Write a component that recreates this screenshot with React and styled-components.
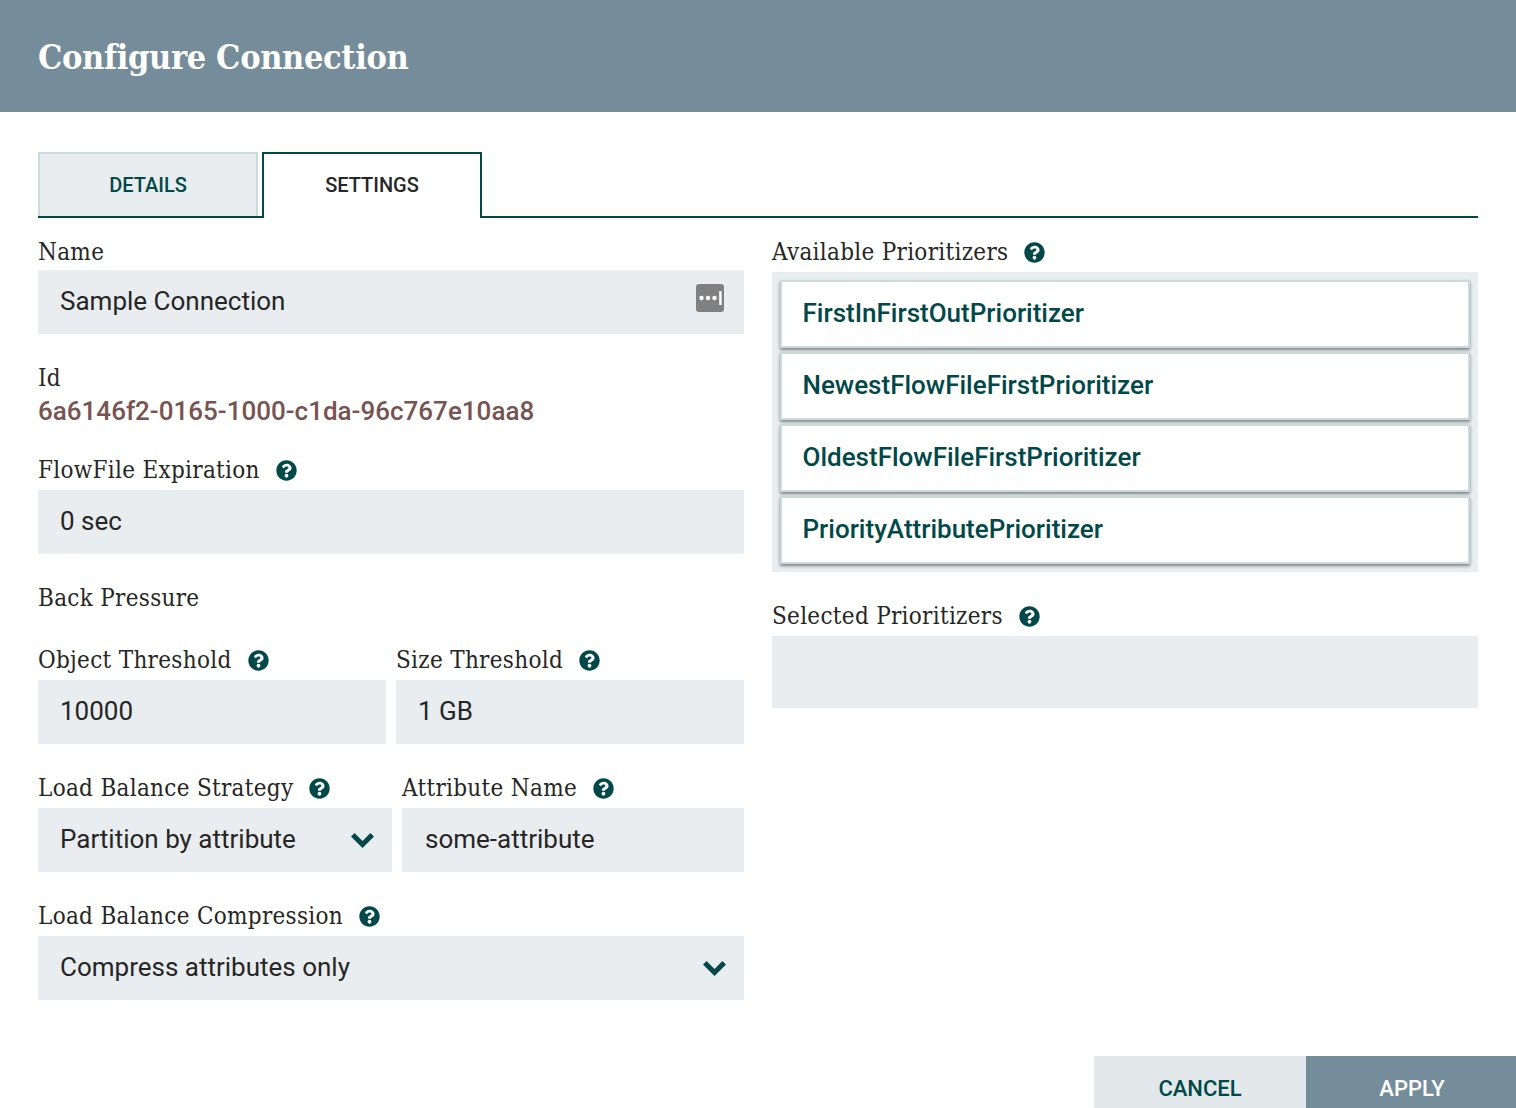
import React from "react";
import styled, { createGlobalStyle } from "styled-components";
import { FaQuestionCircle } from "react-icons/fa";

const Global = createGlobalStyle`
  html, body { margin: 0; padding: 0; background: #fff; }
  body { width: 1516px; height: 1108px; overflow: hidden; font-family: Roboto, sans-serif; }
`;
const slab = `"DejaVu Serif", "Liberation Serif", serif`;

const Dialog = styled.div`
  position: relative;
  width: 1516px;
  height: 1108px;
  display: flex;
  flex-direction: column;
  overflow: hidden;
`;
const Header = styled.header`
  height: 112px;
  flex: none;
  background: #758c9a;
  display: flex;
  align-items: center;
  padding: 0 38px;
  box-sizing: border-box;
`;
const Title = styled.h1`
  margin: 0;
  color: #fff;
  font: 700 34px/1 ${slab};
  letter-spacing: -0.35px;
  font-stretch: condensed;
  padding-top: 2px;
`;
const Body = styled.div`
  padding: 40px 38px 0;
  flex: 1;
`;
const Tabs = styled.div`
  display: flex;
  gap: 4px;
  height: 66px;
  box-sizing: border-box;
  border-bottom: 2px solid #004849;
`;
const Tab = styled.div`
  width: 220px;
  height: ${(p) => (p.$active ? "66px" : "64px")};
  box-sizing: border-box;
  display: flex;
  align-items: center;
  justify-content: center;
  font: 500 20px/1 Roboto, sans-serif;
  padding-bottom: ${(p) => (p.$active ? "2px" : "0")};
  color: ${(p) => (p.$active ? "#262626" : "#004849")};
  background: ${(p) => (p.$active ? "#fff" : "#e9edf0")};
  border: 2px solid ${(p) => (p.$active ? "#004849" : "#ccdadb")};
  border-bottom: 0;
`;
const Columns = styled.div`
  display: grid;
  grid-template-columns: 706px 706px;
  column-gap: 28px;
  padding-top: 14px;
`;
const Column = styled.div`
  display: flex;
  flex-direction: column;
  gap: 24px;
`;
const Field = styled.div`
  display: flex;
  flex-direction: column;
  min-width: 0;
`;
const Label = styled.div`
  height: 40px;
  display: flex;
  align-items: center;
  gap: 16px;
  margin-top: ${(p) => (p.$top ? "22px" : "0")};
  margin-bottom: ${(p) => (p.$tight ? "-2px" : "0")};
  font: 400 24px/1 ${slab};
  letter-spacing: 0.3px;
  font-stretch: condensed;
  color: #262626;
  white-space: nowrap;
`;
const HelpIcon = styled(FaQuestionCircle)`
  color: #004849;
  width: 21px;
  height: 21px;
  flex: none;
`;
const Input = styled.div`
  height: 64px;
  box-sizing: border-box;
  padding: 0 22px 2px ${(p) => (p.$inset ? "23px" : "22px")};
  background: #e9edf0;
  display: flex;
  align-items: center;
  justify-content: space-between;
  font: 400 26px/1 Roboto, sans-serif;
  color: #262626;
`;
const Chevron = styled.svg`
  width: 23px;
  height: 15px;
  margin-right: -4px;
  margin-top: 3px;
  flex: none;
`;
const PasswordIcon = styled.svg`
  width: 28px;
  height: 28px;
  margin-right: -2px;
  margin-top: -6px;
`;
const IdValue = styled.div`
  height: 30px;
  display: flex;
  align-items: center;
  font: 500 26px/1 Roboto, sans-serif;
  color: #775351;
`;
const Row = styled.div`
  display: grid;
  grid-template-columns: ${(p) => p.$cols};
  column-gap: 10px;
`;
const Stack = styled.div`
  display: flex;
  flex-direction: column;
`;
const ListBox = styled.div`
  background: #e9edf0;
  padding: 8px;
  display: flex;
  flex-direction: column;
  gap: 4px;
  min-height: ${(p) => (p.$empty ? "72px" : "0")};
  box-sizing: border-box;
`;
const ListItem = styled.div`
  height: 68px;
  box-sizing: border-box;
  background: #fff;
  border: 2px solid #ccdadb;
  box-shadow: 0 2px 3px rgba(0, 0, 0, 0.45);
  display: flex;
  align-items: center;
  padding: 0 21px 2px 20.5px;
  font: 500 26px/1 Roboto, sans-serif;
  color: #004849;
`;
const Footer = styled.div`
  position: absolute;
  right: 0;
  top: 1056px;
  display: flex;
`;
const Button = styled.div`
  width: ${(p) => p.$w}px;
  height: 66px;
  box-sizing: border-box;
  padding-left: ${(p) => (p.$primary ? "2px" : "0")};
  display: flex;
  align-items: center;
  justify-content: center;
  font: 500 22px/1 Roboto, sans-serif;
  color: ${(p) => (p.$primary ? "#fff" : "#004849")};
  background: ${(p) => (p.$primary ? "#758c9a" : "#e3e8eb")};
`;

const Help = () => <HelpIcon aria-hidden="true" />;
const Caret = () => (
  <Chevron viewBox="0 0 23 15">
    <path d="M0 3.6 3.6 0 11.5 8 19.4 0 23 3.6 11.5 15Z" fill="#004849" />
  </Chevron>
);

export default function App() {
  return (
    <Dialog>
      <Global />
      <Header>
        <Title>Configure Connection</Title>
      </Header>
      <Body>
        <Tabs>
          <Tab>DETAILS</Tab>
          <Tab $active>SETTINGS</Tab>
        </Tabs>
        <Columns>
          <Column>
            <Field>
              <Label $tight>Name</Label>
              <Input>
                Sample Connection
                <PasswordIcon viewBox="0 0 28 28">
                  <rect width="28" height="28" rx="3" fill="#808080" />
                  <circle cx="5.5" cy="14" r="2.2" fill="#fff" />
                  <circle cx="12" cy="14" r="2.2" fill="#fff" />
                  <circle cx="18.5" cy="14" r="2.2" fill="#fff" />
                  <rect x="23.2" y="7" width="2.4" height="14" fill="#fff" />
                </PasswordIcon>
              </Input>
            </Field>
            <Field>
              <Label $tight>Id</Label>
              <IdValue>6a6146f2-0165-1000-c1da-96c767e10aa8</IdValue>
            </Field>
            <Field>
              <Label>
                FlowFile Expiration <Help />
              </Label>
              <Input>0 sec</Input>
            </Field>
            <Stack>
              <Label>Back Pressure</Label>
              <Row $cols="348px 348px">
                <Field>
                  <Label $top>
                    Object Threshold <Help />
                  </Label>
                  <Input>10000</Input>
                </Field>
                <Field>
                  <Label $top>
                    Size Threshold <Help />
                  </Label>
                  <Input>1 GB</Input>
                </Field>
              </Row>
            </Stack>
            <Row $cols="354px 342px">
              <Field>
                <Label>
                  Load Balance Strategy <Help />
                </Label>
                <Input>
                  Partition by attribute
                  <Caret />
                </Input>
              </Field>
              <Field>
                <Label>
                  Attribute Name <Help />
                </Label>
                <Input $inset>some-attribute</Input>
              </Field>
            </Row>
            <Field>
              <Label>
                Load Balance Compression <Help />
              </Label>
              <Input>
                Compress attributes only
                <Caret />
              </Input>
            </Field>
          </Column>
          <Column>
            <Field>
              <Label>
                Available Prioritizers <Help />
              </Label>
              <ListBox>
                <ListItem>FirstInFirstOutPrioritizer</ListItem>
                <ListItem>NewestFlowFileFirstPrioritizer</ListItem>
                <ListItem>OldestFlowFileFirstPrioritizer</ListItem>
                <ListItem>PriorityAttributePrioritizer</ListItem>
              </ListBox>
            </Field>
            <Field>
              <Label>
                Selected Prioritizers <Help />
              </Label>
              <ListBox $empty />
            </Field>
          </Column>
        </Columns>
      </Body>
      <Footer>
        <Button $w={212}>CANCEL</Button>
        <Button $w={210} $primary>
          APPLY
        </Button>
      </Footer>
    </Dialog>
  );
}
